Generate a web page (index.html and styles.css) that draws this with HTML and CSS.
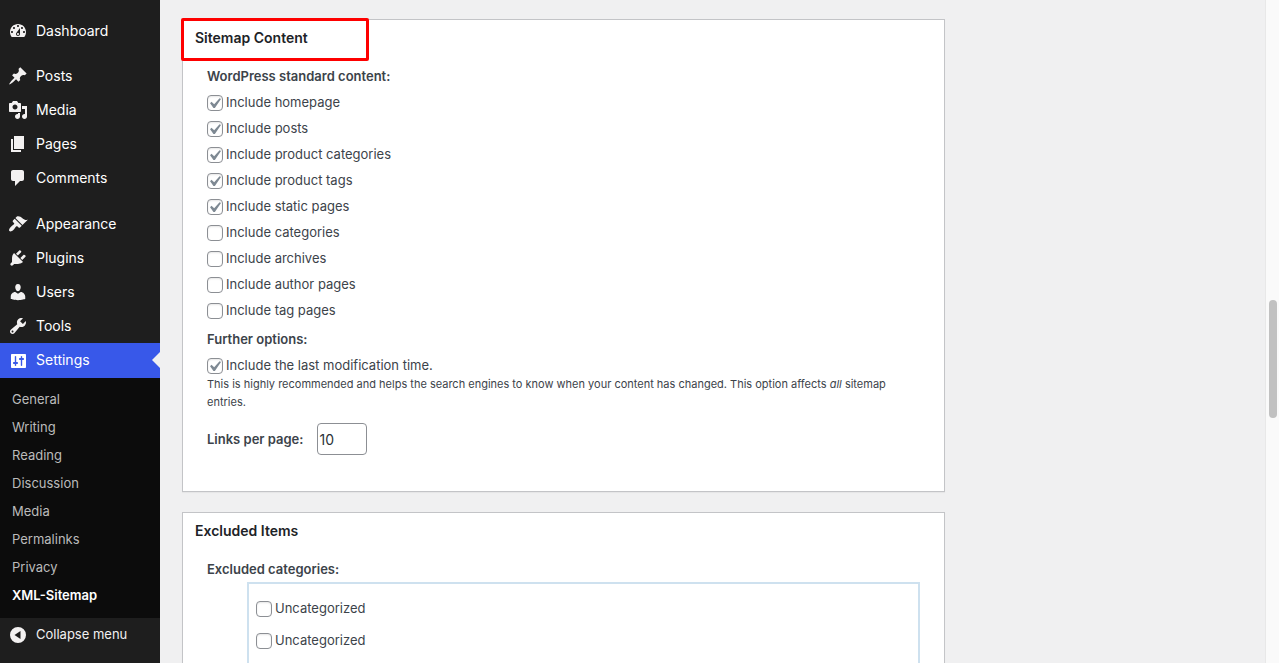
FILE: index.html
```html
<!DOCTYPE html>
<html lang="en">
<head>
  <meta charset="UTF-8" />
  <title>XML-Sitemap</title>
  <link rel="stylesheet" href="styles.css">
</head>
<body>
  <!-- Admin menu -->
  <nav class="admin-menu">
    <ul class="menu">
      <li><a href="#"><svg class="icon" viewBox="0 0 20 20"><path fill-rule="evenodd" d="M3.76 16h12.48c1.1-1.37 1.76-3.11 1.76-5 0-4.42-3.58-8-8-8s-8 3.58-8 8c0 1.89.66 3.63 1.76 5zM10 4c.55 0 1 .45 1 1s-.45 1-1 1-1-.45-1-1 .45-1 1-1zM6 6c.55 0 1 .45 1 1s-.45 1-1 1-1-.45-1-1 .45-1 1-1zm8 0c.55 0 1 .45 1 1s-.45 1-1 1-1-.45-1-1 .45-1 1-1zm-5.37 5.55L12 7v6c0 1.1-.9 2-2 2s-2-.9-2-2c0-.57.24-1.08.63-1.45zM4 10c.55 0 1 .45 1 1s-.45 1-1 1-1-.45-1-1 .45-1 1-1zm12 0c.55 0 1 .45 1 1s-.45 1-1 1-1-.45-1-1 .45-1 1-1zm-5 3c0-.55-.45-1-1-1s-1 .45-1 1 .45 1 1 1 1-.45 1-1z"/></svg>Dashboard</a></li>
      <li class="separator"></li>
      <li><a href="#"><svg class="icon" viewBox="0 0 20 20"><path d="M10.44 3.02l1.82-1.82 6.36 6.35-1.83 1.82c-1.05-.68-2.48-.57-3.41.36l-.75.75c-.92.93-1.04 2.35-.35 3.41l-1.83 1.82-2.41-2.41-2.8 2.79c-.42.42-3.38 2.71-3.8 2.29s1.86-3.39 2.28-3.81l2.79-2.79L4.1 9.36l1.83-1.82c1.05.69 2.48.57 3.4-.36l.75-.75c.93-.92 1.05-2.35.36-3.41z"/></svg>Posts</a></li>
      <li><a href="#"><svg class="icon" viewBox="0 0 20 20"><path fill-rule="evenodd" d="M13 11V4c0-.55-.45-1-1-1h-1.67L9 1H5L3.67 3H2c-.55 0-1 .45-1 1v7c0 .55.45 1 1 1h10c.55 0 1-.45 1-1zM7 4.5c1.38 0 2.5 1.12 2.5 2.5S8.38 9.5 7 9.5 4.5 8.38 4.5 7 5.62 4.5 7 4.5zM14 6h5v10.5c0 1.38-1.12 2.5-2.5 2.5S14 17.88 14 16.5s1.12-2.5 2.5-2.5c.17 0 .34.02.5.05V9h-3V6zm-4 8.05V13h2v3.5c0 1.38-1.12 2.5-2.5 2.5S7 17.88 7 16.5 8.12 14 9.5 14c.17 0 .34.02.5.05z"/></svg>Media</a></li>
      <li><a href="#"><svg class="icon" viewBox="0 0 20 20"><path d="M6 15V2h10v13H6zm-1 1h8v2H3V5h2v11z"/></svg>Pages</a></li>
      <li><a href="#"><svg class="icon" viewBox="0 0 20 20"><path d="M5 2h9c1.1 0 2 .9 2 2v7c0 1.1-.9 2-2 2h-2l-5 5v-5H5c-1.1 0-2-.9-2-2V4c0-1.1.9-2 2-2z"/></svg>Comments</a></li>
    </ul>
    <ul class="menu menu-admin">
      <li><a href="#"><svg class="icon" viewBox="0 0 20 20"><path d="M14.48 11.06L7.41 3.99l1.5-1.5c.5-.56 2.3-.47 3.51.32 1.21.8 1.43 1.28 2.91 2.1 1.18.64 2.45 1.26 4.45.85zm-.71.71L6.7 4.7 4.93 6.47c-.39.39-.39 1.02 0 1.41l1.06 1.06c.39.39.39 1.03 0 1.42-.6.6-1.43 1.11-2.21 1.69-.35.26-.7.53-1.01.84C1.43 14.23.4 16.08 1.4 17.07c.99 1 2.84-.03 4.18-1.36.31-.31.58-.66.85-1.02.57-.78 1.08-1.61 1.69-2.21.39-.39 1.02-.39 1.41 0l1.06 1.06c.39.39 1.02.39 1.41 0z"/></svg>Appearance</a></li>
      <li><a href="#"><svg class="icon" viewBox="0 0 20 20"><path d="M13.11 4.36L9.87 7.6 8 5.73l3.24-3.24c.35-.34 1.05-.2 1.56.32.52.51.66 1.21.31 1.55zm-8 1.77l.91-1.12 9.01 9.01-1.19.84c-.71.71-2.63 1.16-3.82 1.16H6.14L4.9 17.26c-.59.59-1.54.59-2.12 0-.59-.58-.59-1.53 0-2.12l1.24-1.24v-3.88c0-1.13.4-3.19 1.09-3.89zm7.26 3.97l3.24-3.24c.34-.35 1.04-.21 1.55.31.52.51.66 1.21.31 1.55l-3.24 3.25z"/></svg>Plugins</a></li>
      <li><a href="#"><svg class="icon" viewBox="0 0 20 20"><path d="M10 9.25c-2.27 0-2.73-3.44-2.73-3.44C7 4.02 7.82 2 9.97 2c2.16 0 2.98 2.02 2.71 3.81 0 0-.41 3.44-2.68 3.44zm0 2.57L12.72 10c2.39 0 4.52 2.33 4.52 4.53v2.49s-3.65 1.13-7.24 1.13c-3.65 0-7.24-1.13-7.24-1.13v-2.49c0-2.25 1.94-4.48 4.47-4.48z"/></svg>Users</a></li>
      <li><a href="#"><svg class="icon" viewBox="0 0 20 20"><path fill-rule="evenodd" d="M16.68 9.77c-1.34 1.34-3.3 1.67-4.95.99l-5.41 6.52c-.99.99-2.59.99-3.58 0s-.99-2.59 0-3.57l6.52-5.42c-.68-1.65-.35-3.61.99-4.95 1.28-1.28 3.12-1.62 4.72-1.06l-2.89 2.89 2.82 2.82 2.86-2.87c.53 1.58.18 3.39-1.08 4.65zM3.81 16.21c.4.39 1.04.39 1.43 0 .4-.4.4-1.04 0-1.43-.39-.4-1.03-.4-1.43 0-.39.39-.39 1.03 0 1.43z"/></svg>Tools</a></li>
      <li class="current"><a href="#"><svg class="icon" viewBox="0 0 20 20"><path fill-rule="evenodd" d="M18 16V4c0-.55-.45-1-1-1H4c-.55 0-1 .45-1 1v12c0 .55.45 1 1 1h13c.55 0 1-.45 1-1zM8 11h1c.55 0 1 .45 1 1s-.45 1-1 1h-.8v1.5c0 .28-.22.5-.7.5s-.7-.22-.7-.5V13H6c-.55 0-1-.45-1-1s.45-1 1-1h.8V5.500c0-.28.3-.5.7-.5s.7.22.7.5V11zm4.800-2H12c-.55 0-1-.45-1-1s.45-1 1-1h.8V5.500c0-.28.3-.5.7-.5s.7.22.7.5V7h.8c.55 0 1 .45 1 1s-.45 1-1 1h-.8v5.500c0 .28-.3.5-.7.5s-.7-.22-.7-.5V9z"/></svg>Settings</a></li>
    </ul>
    <ul class="submenu">
      <li><a href="#">General</a></li>
      <li><a href="#">Writing</a></li>
      <li><a href="#">Reading</a></li>
      <li><a href="#">Discussion</a></li>
      <li><a href="#">Media</a></li>
      <li><a href="#">Permalinks</a></li>
      <li><a href="#">Privacy</a></li>
      <li><a href="#" class="active">XML-Sitemap</a></li>
    </ul>
    <button type="button" class="collapse-btn"><svg class="icon" viewBox="0 0 20 20"><path fill-rule="evenodd" d="M10 2a8 8 0 1 1 0 16 8 8 0 0 1 0-16zM12.500 6v8l-6-4z"/></svg>Collapse menu</button>
  </nav>

  <main class="content">
    <section class="postbox">
      <h2>Sitemap Content</h2>
      <div class="highlight"></div>
      <div class="inside">
        <h3>WordPress standard content:</h3>
        <ul class="options">
          <li><input type="checkbox" id="home" checked><label for="home">Include homepage</label></li>
          <li><input type="checkbox" id="posts" checked><label for="posts">Include posts</label></li>
          <li><input type="checkbox" id="prodcats" checked><label for="prodcats">Include product categories</label></li>
          <li><input type="checkbox" id="prodtags" checked><label for="prodtags">Include product tags</label></li>
          <li><input type="checkbox" id="pages" checked><label for="pages">Include static pages</label></li>
          <li><input type="checkbox" id="cats"><label for="cats">Include categories</label></li>
          <li><input type="checkbox" id="archives"><label for="archives">Include archives</label></li>
          <li><input type="checkbox" id="authors"><label for="authors">Include author pages</label></li>
          <li><input type="checkbox" id="tags"><label for="tags">Include tag pages</label></li>
        </ul>
        <h3>Further options:</h3>
        <ul class="options">
          <li><input type="checkbox" id="lastmod" checked><label for="lastmod">Include the last modification time.</label></li>
        </ul>
        <p class="note">This is highly recommended and helps the search engines to know when your content has changed. This option affects <em>all</em> sitemap entries.</p>
        <div class="links-row">
          <label for="links">Links per page:</label>
          <input type="text" id="links" value="10">
        </div>
      </div>
    </section>

    <section class="postbox">
      <h2>Excluded Items</h2>
      <div class="inside">
        <h3>Excluded categories:</h3>
        <ul class="category-list">
          <li><input type="checkbox" id="uncat1"><label for="uncat1">Uncategorized</label></li>
          <li><input type="checkbox" id="uncat2"><label for="uncat2">Uncategorized</label></li>
        </ul>
      </div>
    </section>
  </main>

  <div class="scrollbar"><div class="thumb"></div></div>
</body>
</html>
```
FILE: styles.css
```css
* { box-sizing: border-box; }

body {
  margin: 0;
  display: flex;
  height: 100vh;
  overflow: hidden;
  background: #f0f0f1;
  color: #3c434a;
  font-family: Inter, "Liberation Sans", sans-serif;
  font-size: 13px;
}

ul {
  list-style: none;
  margin: 0;
  padding: 0;
}

/* Admin menu */
.admin-menu {
  width: 160px;
  flex-shrink: 0;
  background: #1e1e1e;
}

.menu { padding-top: 14px; }
.menu-admin { padding-top: 12px; }

.menu a,
.collapse-btn {
  display: flex;
  align-items: center;
  gap: 8px;
  height: 34px;
  padding: 0 8px 2px;
  color: #fff;
  font-size: 14px;
  text-decoration: none;
}

.separator { height: 11px; }

.icon {
  width: 20px;
  height: 20px;
  margin-top: 2px;
  fill: #f3f1f1;
}

.current {
  position: relative;
  background: #3858e9;
}

.menu .current a { height: 35px; }

.current .icon { fill: #fff; }

.current::after {
  content: "";
  position: absolute;
  top: 9px;
  right: 0;
  border: 8px solid transparent;
  border-left: none;
  border-right-color: #f0f0f1;
}

.submenu {
  padding: 7px 0 9px;
  background: #0c0c0c;
}

.submenu a {
  display: block;
  padding: 0 12px;
  color: #bbb;
  line-height: 28px;
  text-decoration: none;
}

.submenu .active {
  color: #fff;
  font-weight: 600;
}

.collapse-btn {
  width: 100%;
  border: none;
  background: none;
  color: #f0f0f1;
  font-family: inherit;
  font-size: 13px;
  cursor: pointer;
}

/* Content, the empty column on the right is 300px + gap */
.content {
  flex: 1;
  padding: 19px 320px 0 22px;
}

.postbox {
  position: relative;
  margin-bottom: 20px;
  border: 1px solid #c3c4c7;
  background: #fff;
  box-shadow: 0 1px 1px rgba(0, 0, 0, 0.04);
}

.postbox h2 {
  margin: 0;
  padding: 8px 12px;
  color: #1d2327;
  font-size: 14px;
  font-weight: 600;
  line-height: 20px;
}

.highlight {
  position: absolute;
  top: -2px;
  left: -2px;
  width: 188px;
  height: 43px;
  border: 3px solid #fe0000;
  border-radius: 2px;
}

.inside { padding: 10px 24px 36px; }

.inside h3 {
  margin: 0;
  font-size: 13px;
  font-weight: 600;
  line-height: 20px;
}

.options {
  display: flex;
  flex-direction: column;
  gap: 6px;
  padding-top: 6px;
}

.options + h3 { margin-top: 9px; }

.options li {
  display: flex;
  align-items: center;
  gap: 3px;
  height: 20px;
}

input[type="checkbox"] {
  appearance: none;
  width: 16px;
  height: 16px;
  margin: 2px 0 0;
  border: 1px solid #8c8f94;
  border-radius: 4px;
  background: #fff;
  box-shadow: inset 0 1px 2px rgba(0, 0, 0, 0.1);
}

input[type="checkbox"]:checked {
  background: #fff url("data:image/svg+xml,%3Csvg xmlns='http://www.w3.org/2000/svg' viewBox='0 0 20 20'%3E%3Cpath d='M14.830 4.890l1.340.940-5.810 8.380H9.020L5.780 9.670l1.340-1.250 2.570 2.400z' fill='%237e8993'/%3E%3C/svg%3E") -4px -3px / 21px no-repeat;
}

.note {
  margin: 0;
  font-size: 11px;
  line-height: 18px;
}

.links-row {
  display: flex;
  align-items: center;
  gap: 14px;
  padding-top: 12px;
}

.links-row label { font-weight: 600; }

.links-row input {
  width: 50px;
  height: 32px;
  padding: 0 1px;
  border: 1px solid #8c8f94;
  border-radius: 4px;
  color: #2c3338;
  font-family: inherit;
  font-size: 14px;
}

.category-list {
  margin: 3px 0 0 40px;
  padding: 8px 7px 60px;
  border: 2px solid #cee1ef;
}

.category-list li {
  display: flex;
  align-items: center;
  gap: 3px;
  height: 32px;
}

/* Scrollbar */
.scrollbar {
  width: 14px;
  flex-shrink: 0;
  padding: 300px 2px 0 3px;
  border-left: 1px solid #e8e8e8;
  background: #fafafa;
}

.thumb {
  height: 118px;
  border-radius: 4px;
  background: #c1c1c1;
}
```
